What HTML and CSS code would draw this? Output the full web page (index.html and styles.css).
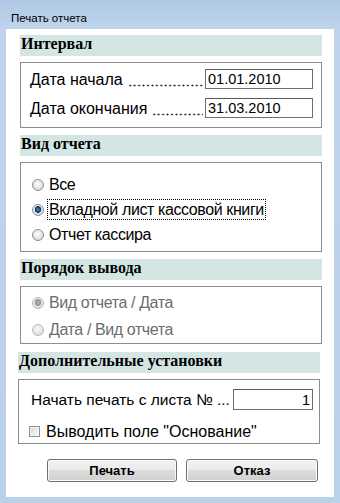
FILE: index.html
```html
<!DOCTYPE html>
<html lang="ru">

<head>
    <meta charset="UTF-8">
    <meta name="viewport" content="width=device-width, initial-scale=1.0">
    <title>Печать отчета</title>
    <link rel="stylesheet" href="styles.css">
</head>

<body>
    <div class="window">
        <div class="window__title">Печать отчета</div>

        <div class="window__body">

            <h3 class="group__title">Интервал</h3>
            <div class="group group--dates">
                <div class="field">
                    <span class="field__label">Дата начала</span>
                    <span class="field__dots"></span>
                    <input class="field__inp" type="text" value="01.01.2010">
                </div>
                <div class="field">
                    <span class="field__label">Дата окончания</span>
                    <span class="field__dots"></span>
                    <input class="field__inp" type="text" value="31.03.2010">
                </div>
            </div>

            <h3 class="group__title">Вид отчета</h3>
            <div class="group group--kind">
                <label class="option">
                    <input class="option__radio" type="radio" name="kind">
                    <span class="option__text">Все</span>
                </label>
                <label class="option">
                    <input class="option__radio" type="radio" name="kind" checked>
                    <span class="option__text option__text--focus">Вкладной лист кассовой книги</span>
                </label>
                <label class="option">
                    <input class="option__radio" type="radio" name="kind">
                    <span class="option__text">Отчет кассира</span>
                </label>
            </div>

            <h3 class="group__title">Порядок вывода</h3>
            <div class="group group--order">
                <label class="option option--off">
                    <input class="option__radio" type="radio" name="order" checked disabled>
                    <span class="option__text">Вид отчета / Дата</span>
                </label>
                <label class="option option--off">
                    <input class="option__radio" type="radio" name="order" disabled>
                    <span class="option__text">Дата / Вид отчета</span>
                </label>
            </div>

            <h3 class="group__title group__title--extra">Дополнительные установки</h3>
            <div class="group group--extra">
                <div class="field">
                    <span class="field__label field__label--page">Начать печать с листа № ...</span>
                    <input class="field__inp field__inp--num" type="text" value="1">
                </div>
                <label class="option option--check">
                    <input class="option__check" type="checkbox">
                    <span class="option__text">Выводить поле "Основание"</span>
                </label>
            </div>

            <div class="buttons">
                <button class="btn btn--print">Печать</button>
                <button class="btn btn--cancel">Отказ</button>
            </div>

        </div>
    </div>
</body>

</html>
```

FILE: styles.css
```css
* {
    padding: 0;
    margin: 0;
    box-sizing: border-box;
}

body {
    font-family: 'Liberation Sans', Arial, sans-serif;
    color: #000;
    font-size: 16px;
}

.window {
    width: 340px;
    height: 503px;
    background: linear-gradient(#afc8e5, #bfd4ec 29px, #bad1ea);
    display: flex;
    flex-direction: column;
}

.window__title {
    height: 29px;
    padding: 12px 0 0 11px;
    font-size: 11.5px;
    line-height: 12px;
    color: #000;
}

.window__body {
    background: #fff;
    margin: 0 6px 6px;
    flex: 1;
    padding: 6px 12px 0 14px;
}

.group__title {
    height: 21px;
    background: #d3e6e4;
    font-family: 'Liberation Serif', 'Times New Roman', serif;
    font-size: 16px;
    line-height: 18px;
    padding: 0 0 3px 1px;
    font-weight: bold;
}

.group__title--extra {
    margin: 8px 2px 0 -2px;
}

.group {
    border: 1px solid #8c8c8c;
    margin-top: 6px;
    margin-bottom: 7px;
}

.group--dates {
    padding: 6px 8px 8px 9px;
    display: flex;
    flex-direction: column;
    gap: 8px;
}

.group--kind {
    padding: 9px 8px 4px 11px;
}

.group--order {
    padding: 2px 8px 0 11px;
    margin-bottom: 0;
}

.group--extra {
    margin: 6px 2px 0 -2px;
    padding: 9px 6px 1px 11px;
    display: flex;
    flex-direction: column;
    gap: 10px;
}

.field {
    display: flex;
    align-items: flex-start;
    height: 21px;
}

.field__label {
    white-space: nowrap;
    line-height: 20px;
    padding-top: 1px;
}

.field__label--page {
    flex: 1;
    font-size: 15.5px;
    margin-left: 1px;
}

/* dotted leader between label and input */
.field__dots {
    flex: 1;
    height: 21px;
    margin: 0 2px 0 5px;
    background: radial-gradient(circle, #1a1a1a 0.75px, transparent 1.15px) left bottom 3px / 4.45px 3px repeat-x;
}

.field__inp {
    width: 108px;
    height: 20px;
    border: 1px solid #6f6f6f;
    border-top-color: #5a5a5a;
    font-family: 'Liberation Sans', Arial, sans-serif;
    font-size: 14.5px;
    padding: 0 2px;
    color: #000;
    outline: none;
}

.field__inp--num {
    width: 80px;
    height: 21px;
    text-align: right;
}

.option {
    display: flex;
    align-items: center;
    height: 25px;
    gap: 3px;
}

.group--order .option {
    height: 27px;
}

.option--off {
    color: #6d6d6d;
}

.option__radio {
    appearance: none;
    width: 12px;
    height: 12px;
    border-radius: 50%;
    border: 1px solid #8d8f91;
    background: radial-gradient(circle at 45% 40%, #ffffff, #e6e6e6 50%, #c9c9c9);
    flex-shrink: 0;
}

.option__radio:checked {
    background:
        radial-gradient(circle at 50% 45%, #4a86c9 0, #1b4f8f 2px, #0c2f5e 3px, transparent 3.6px),
        radial-gradient(circle at 45% 40%, #ffffff, #e6e6e6 50%, #c9c9c9);
}

.option__radio:disabled {
    border-color: #b9b9b9;
    background: radial-gradient(circle at 45% 40%, #fafafa, #e3e3e3 60%, #d2d2d2);
}

.option__radio:disabled:checked {
    background:
        radial-gradient(circle at 50% 45%, #b8b8b8 0, #8e8e8e 3px, transparent 3.6px),
        radial-gradient(circle at 45% 40%, #fafafa, #e3e3e3 60%, #d2d2d2);
}

.option__text {
    font-size: 16px;
    line-height: 19px;
    padding: 0 1px;
    border: 1px solid transparent;
    letter-spacing: -0.4px;
}

.option__text--focus {
    border: 1px dotted #000;
}

.option--check {
    height: 22px;
    gap: 4px;
}

.option--check .option__text {
    letter-spacing: 0;
}

.option__check {
    appearance: none;
    width: 11px;
    height: 11px;
    border: 1px solid #8f8f8f;
    background: linear-gradient(135deg, #d0d0d0, #eeeeee 60%, #f8f8f8);
    box-shadow: inset 0 0 0 1px #f4f4f4;
    flex-shrink: 0;
    margin-left: -1px;
}

.buttons {
    display: flex;
    gap: 9px;
    margin-top: 15px;
    padding-left: 27px;
}

.btn {
    height: 23px;
    width: 130px;
    border: 1px solid #707070;
    border-radius: 3px;
    background: linear-gradient(#f2f2f2, #ebebeb 45%, #dddddd 50%, #cfcfcf);
    box-shadow: inset 0 0 0 1px #fbfbfb;
    font-family: 'Liberation Sans', Arial, sans-serif;
    font-weight: bold;
    font-size: 13px;
    color: #000;
}

.btn--cancel {
    width: 132px;
}
```
